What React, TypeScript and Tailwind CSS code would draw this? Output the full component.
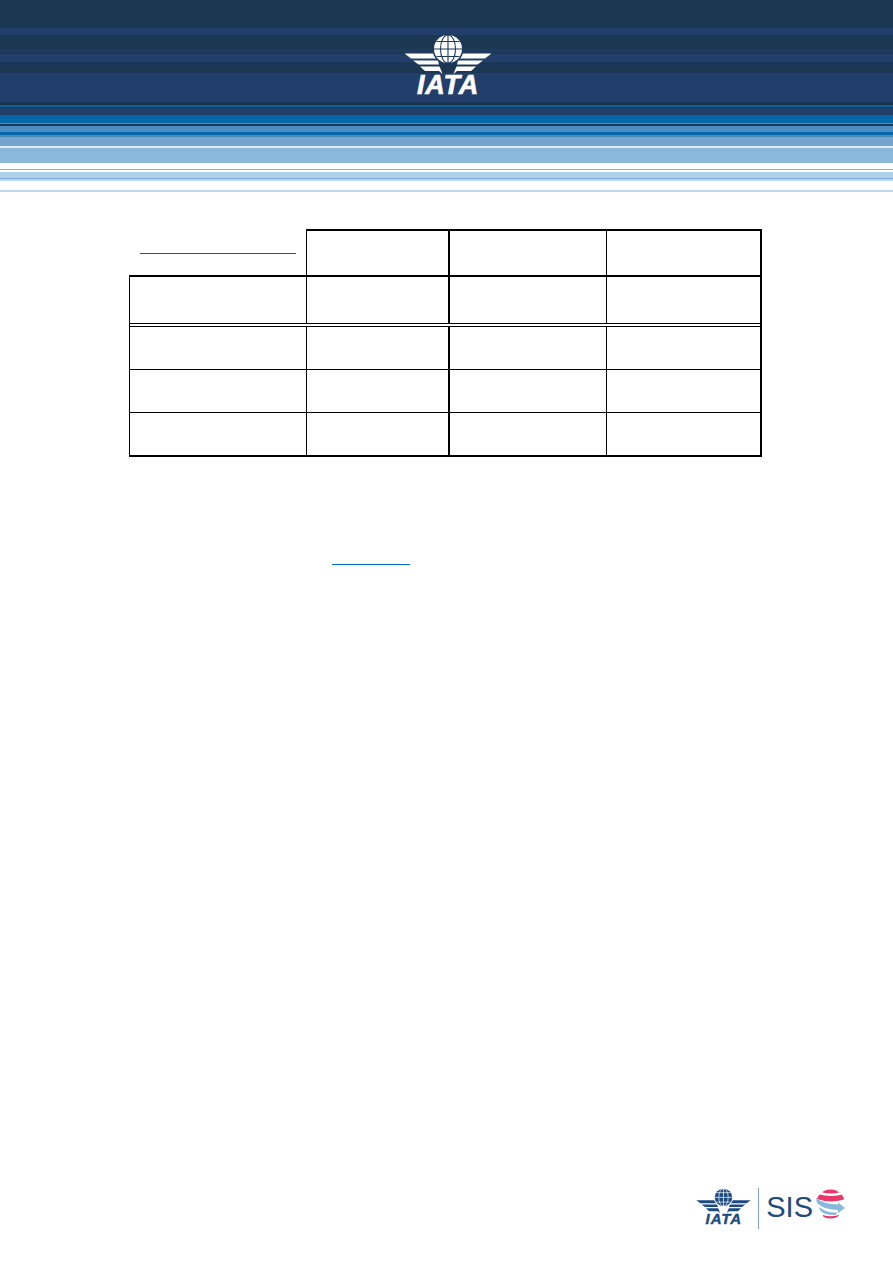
const stripes = [
  "h-[28px] bg-[#1b3752]",
  "h-[7px] bg-[#223f6b]",
  "h-[14px] bg-[#1b3752]",
  "h-[3px] bg-[#203a5f]",
  "h-[2px] bg-[#1c3a58]",
  "h-[8px] bg-[#223f6b]",
  "h-[3px] bg-[#1c3656]",
  "h-[8px] bg-[#1b3752]",
  "h-[29px] bg-[#223f6b]",
  "h-[3px] bg-[#1a3350]",
  "h-[2px] bg-[#0f5f93]",
  "h-[8px] bg-[#223f6b]",
  "h-[8px] bg-[#0568a8]",
  "h-px bg-[#4a8fc0]",
  "h-[2px] bg-[#1c3a5a]",
  "h-[6px] bg-[#4a8ec4]",
  "h-[3px] bg-[#0568a8]",
  "h-[2px] bg-[#4a88bc]",
  "h-[9px] bg-[#75a5cf]",
  "h-[2px] bg-[#e0ecf5]",
  "h-[15px] bg-[#8ab8dc]",
  "h-[6px] bg-white",
  "h-px bg-[#85aad3]",
  "h-[2px] bg-white",
  "h-[6px] bg-[#aed0ea]",
  "h-px bg-[#7ea9d4]",
  "h-[2px] bg-[#bcd7ed]",
  "h-[9px] bg-white",
  "h-[2px] bg-[#bcd7ed]",
];

function Wing({ fill }: { fill: string }) {
  return (
    <g fill={fill}>
      <path d="M0.5 19.5 L29 19.5 Q32 19.5 33 22 L33.5 24.5 L7 24.5 Z" />
      <path d="M9 26.5 L34 26.5 L35 30.5 L14.5 30.5 Z" />
      <path d="M16 32.5 L35.5 32.5 L37 36 L38.5 40 L35 37 L21 37 Z" />
    </g>
  );
}

function IataMark({ width, fill, grid }: { width: number; fill: string; grid: string }) {
  return (
    <svg width={width} viewBox="0 0 88 42" className="block" aria-hidden="true">
      <Wing fill={fill} />
      <g transform="translate(88 0) scale(-1 1)">
        <Wing fill={fill} />
      </g>
      <circle cx="44" cy="15" r="15.5" fill={grid} />
      <circle cx="44" cy="15" r="14" fill={fill} />
      <g fill="none" stroke={grid} strokeWidth="1.1">
        <ellipse cx="44" cy="15" rx="7.5" ry="14" />
        <path d="M44 1 V29 M30 15 H58 M32.5 7.5 H55.5 M32.5 22.5 H55.5" />
      </g>
    </svg>
  );
}

function SisGlobe() {
  return (
    <svg width="29" height="30" viewBox="0 0 29 30" className="block" aria-hidden="true">
      <defs>
        <clipPath id="sis-globe">
          <circle cx="14.5" cy="15" r="14.5" />
        </clipPath>
      </defs>
      <g clipPath="url(#sis-globe)">
        <path d="M4 0 H25 V3 Q15 6 5 3 Z" fill="#e8386a" />
        <path d="M2 5 Q15 9 28 5 L30 10 Q16 15 1 10 Z" fill="#e8386a" />
        <path d="M7 26 Q14 28.5 23 26 L23 30 H7 Z" fill="#e8386a" />
        <path d="M3 18 Q10 24 21 23.5 L20 26 Q9 26.5 4 21.5 Z" fill="#8ab8dc" />
      </g>
      <path d="M0 9 Q8 15.5 22 15.5 L22 13.5 L29 19 L22 24 L22 21 Q8 21 1 14 Z" fill="#8ab8dc" />
    </svg>
  );
}

export default function App() {
  return (
    <div className="relative min-h-[1263px] w-[893px] bg-white font-['Liberation_Sans',Arial,sans-serif]">
      <header className="relative">
        {stripes.map((s, i) => (
          <div key={i} className={s} />
        ))}
        <div className="absolute left-[404px] top-[34px] flex w-[88px] flex-col items-center">
          <IataMark width={88} fill="#ffffff" grid="#1d3a5c" />
          <span className="-mt-[4px] text-[27px] font-bold italic leading-[26px] tracking-[0.8px] text-white [-webkit-text-stroke:0.6px_#ffffff]">IATA</span>
        </div>
      </header>

      <table className="ml-[129px] mt-[37px] w-[633px] table-fixed border-separate border-spacing-0">
        <colgroup>
          <col className="w-[178px]" />
          <col className="w-[143px]" />
          <col className="w-[157px]" />
          <col className="w-[155px]" />
        </colgroup>
        <tbody>
          <tr>
            <td className="h-[48px] border-b-2 border-r border-black pl-[11px] pt-[24px] align-top">
              <div className="h-px w-[156px] bg-[#e00b0b]" />
            </td>
            <td className="h-[48px] border-b-2 border-r-2 border-t-2 border-black" />
            <td className="h-[48px] border-b-2 border-r border-t-2 border-black" />
            <td className="h-[48px] border-b-2 border-r-2 border-t-2 border-black" />
          </tr>
          <tr>
            <td className="h-[47px] border-b border-l border-r border-black" />
            <td className="h-[47px] border-b border-r-2 border-black" />
            <td className="h-[47px] border-b border-r border-black" />
            <td className="h-[47px] border-b border-r-2 border-black" />
          </tr>
          <tr>
            <td colSpan={4} className="h-[2px] border-l border-r-2 border-black p-0 text-[0px] leading-[0]" />
          </tr>
          <tr>
            <td className="h-[44px] border-b border-l border-r border-t border-black" />
            <td className="h-[44px] border-b border-r-2 border-t border-black" />
            <td className="h-[44px] border-b border-r border-t border-black" />
            <td className="h-[44px] border-b border-r-2 border-t border-black" />
          </tr>
          <tr>
            <td className="h-[43px] border-b border-l border-r border-black" />
            <td className="h-[43px] border-b border-r-2 border-black" />
            <td className="h-[43px] border-b border-r border-black" />
            <td className="h-[43px] border-b border-r-2 border-black" />
          </tr>
          <tr>
            <td className="h-[44px] border-b-2 border-l border-r border-black" />
            <td className="h-[44px] border-b-2 border-r-2 border-black" />
            <td className="h-[44px] border-b-2 border-r border-black" />
            <td className="h-[44px] border-b-2 border-r-2 border-black" />
          </tr>
        </tbody>
      </table>

      <div className="ml-[332px] mt-[107px] h-px w-[78px] bg-[#0070c0]" />

      <footer className="mt-[623px] flex items-start justify-end pr-[48px]">
        <div className="flex w-[55px] flex-col items-center">
          <IataMark width={55} fill="#1c4a80" grid="#ffffff" />
          <span className="-mt-[3px] text-[15px] font-bold italic leading-[16px] tracking-[0.9px] text-[#1c4a80] [-webkit-text-stroke:0.4px_#1c4a80]">IATA</span>
        </div>
        <div className="ml-[7px] h-[41px] w-px bg-[#7fa3cc]" />
        <span className="ml-[7px] mt-[3px] text-[29px] leading-[32px] text-[#1f4a7e]">SIS</span>
        <div className="ml-[3px] mt-px">
          <SisGlobe />
        </div>
      </footer>
    </div>
  );
}
